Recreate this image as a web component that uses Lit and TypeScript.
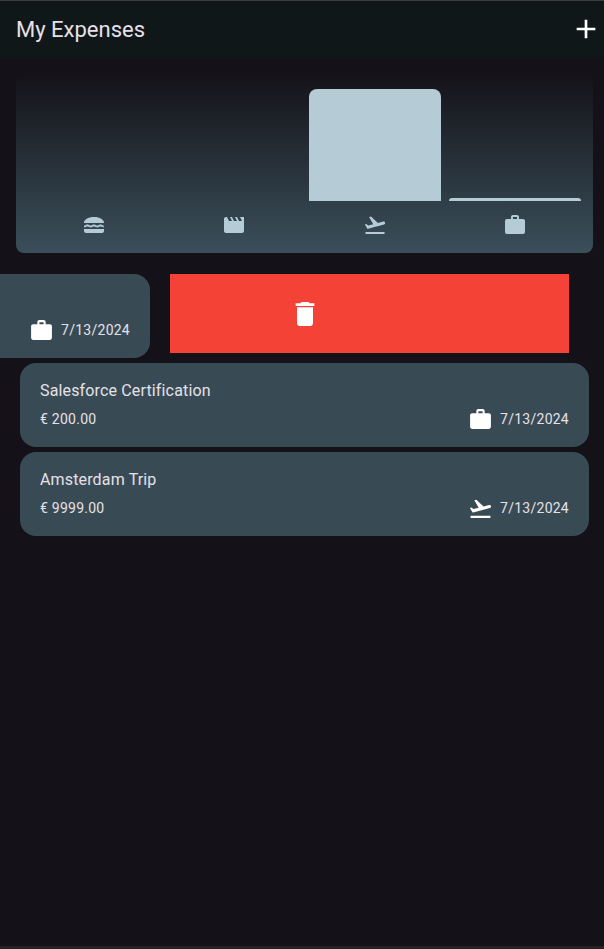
import { LitElement, html, css, svg } from "lit";
import { customElement } from "lit/decorators.js";

const ICONS = {
  food: svg`<path d="M22 10c.32-3.28-4.28-6-9.99-6S1.67 6.72 2 10h20zM5.35 13.5c.55 0 .78.14 1.15.36.45.27 1.07.64 2.13.64s1.67-.37 2.13-.64c.37-.23.59-.36 1.15-.36.55 0 .78.14 1.15.36.45.27 1.07.64 2.13.64 1.06 0 1.68-.37 2.13-.64.37-.22.6-.36 1.15-.36.55 0 .78.14 1.15.36.45.27 1.07.63 2.13.63v-2c-.55 0-.78-.14-1.15-.36-.45-.27-1.07-.64-2.13-.64s-1.68.37-2.13.64c-.37.23-.6.36-1.15.36s-.78-.14-1.15-.36c-.45-.27-1.07-.64-2.13-.64s-1.67.37-2.13.64c-.37.23-.59.36-1.15.36-.55 0-.78-.14-1.15-.36-.45-.27-1.07-.63-2.13-.63s-1.67.37-2.13.64c-.37.22-.6.36-1.15.36v2c1.06 0 1.68-.37 2.13-.64.37-.22.6-.36 1.15-.36zM2 16v2c0 1.1.9 2 2 2h16c1.1 0 2-.9 2-2v-2H2z"/>`,
  movie: svg`<path d="M18 4l2 4h-3l-2-4h-2l2 4h-3l-2-4H8l2 4H7L5 4H4c-1.1 0-1.99.9-1.99 2L2 18c0 1.1.9 2 2 2h16c1.1 0 2-.9 2-2V4h-4z"/>`,
  travel: svg`<path d="M2.5 19h19v2h-19zm19.57-9.36c-.21-.8-1.04-1.28-1.84-1.06L14.92 10l-6.9-6.43-1.93.51 4.14 7.17-4.97 1.33-1.97-1.54-1.45.39 1.82 3.16.77 1.33 1.6-.43 5.31-1.42 4.35-1.16L21 11.49c.81-.23 1.28-1.05 1.07-1.85z"/>`,
  work: svg`<path d="M20 6h-4V4c0-1.11-.89-2-2-2h-4c-1.11 0-2 .89-2 2v2H4c-1.11 0-1.99.89-1.99 2L2 19c0 1.11.89 2 2 2h16c1.11 0 2-.89 2-2V8c0-1.11-.89-2-2-2zm-6 0h-4V4h4v2z"/>`,
  trash: svg`<path d="M6 19c0 1.1.9 2 2 2h8c1.1 0 2-.9 2-2V7H6v12zM19 4h-3.5l-1-1h-5l-1 1H5v2h14V4z"/>`,
  add: svg`<path d="M19 13h-6v6h-2v-6H5v-2h6V5h2v6h6v2z"/>`,
};

type IconName = keyof typeof ICONS;

const icon = (name: IconName) => html`<svg viewBox="0 0 24 24" fill="currentColor">${ICONS[name]}</svg>`;

const BARS: { name: IconName; percent: number }[] = [
  { name: "food", percent: 0 },
  { name: "movie", percent: 0 },
  { name: "travel", percent: 100 },
  { name: "work", percent: 2.7 },
];

const EXPENSES: { title: string; amount: string; kind: IconName; date: string }[] = [
  { title: "Salesforce Certification", amount: "€ 200.00", kind: "work", date: "7/13/2024" },
  { title: "Amsterdam Trip", amount: "€ 9999.00", kind: "travel", date: "7/13/2024" },
];

@customElement("app-root")
export class AppRoot extends LitElement {
  static styles = css`
    :host {
      display: block;
      font-family: Roboto, sans-serif;
      color: #e6e0e9;
    }

    .page {
      display: flex;
      flex-direction: column;
      height: 949px;
      overflow: hidden;
      background: #141218;
      border-top: 1px solid #3a3d3f;
      border-bottom: 3px solid #232323;
      box-sizing: border-box;
    }

    .toolbar {
      display: flex;
      align-items: center;
      justify-content: space-between;
      height: 56px;
      padding: 0 2px 0 16px;
      background: #101719;
      flex: none;
    }

    .title {
      font-size: 22px;
      font-weight: 400;
    }

    .add {
      width: 32px;
      height: 32px;
      color: #fff;
    }

    .add svg {
      display: block;
    }

    .content {
      flex: 1;
      display: flex;
      flex-direction: column;
    }

    .chart {
      display: grid;
      grid-template-columns: repeat(4, 1fr);
      gap: 0 8px;
      margin: 16px 11px 0 16px;
      padding: 16px 12px;
      border-radius: 8px;
      background: linear-gradient(#141218, #3a4f5a);
    }

    .column {
      display: flex;
      flex-direction: column;
      align-items: center;
      gap: 12px;
    }

    .track {
      display: flex;
      align-items: flex-end;
      width: 100%;
      height: 112px;
    }

    .bar {
      width: 100%;
      background: #b5cbd6;
      border-radius: 8px 8px 0 0;
    }

    .column svg {
      display: block;
      width: 24px;
      height: 24px;
      color: #b5cbd6;
    }

    .list {
      display: flex;
      flex-direction: column;
      gap: 5px;
      margin-top: 21px;
    }

    .swiped {
      display: flex;
      gap: 20px;
      align-items: flex-start;
    }

    .card {
      box-sizing: border-box;
      height: 84px;
      padding: 17px 20px 0;
      background: #384b54;
      border-radius: 16px;
      font-size: 14px;
      letter-spacing: 0.25px;
    }

    .expense {
      margin: 0 15px 0 20px;
    }

    .swiped .card {
      width: 150px;
      flex: none;
      border-radius: 0 16px 16px 0;
    }

    .name {
      height: 22px;
      line-height: 22px;
      font-size: 16px;
      letter-spacing: 0.15px;
    }

    .meta {
      display: flex;
      justify-content: space-between;
      align-items: center;
      margin-top: 4px;
      height: 26px;
    }

    .when {
      display: flex;
      align-items: center;
      gap: 7px;
      margin-left: auto;
    }

    .amount + .when {
      margin-left: 0;
    }

    .when svg {
      display: block;
      width: 25px;
      height: 25px;
      color: #fff;
    }

    .delete {
      display: flex;
      align-items: center;
      width: 399px;
      height: 79px;
      flex: none;
      padding-left: 119px;
      box-sizing: border-box;
      background: #f44336;
      color: #fff;
    }

    .delete svg {
      display: block;
      width: 32px;
      height: 32px;
    }
  `;

  render() {
    return html`
      <div class="page">
        <header class="toolbar">
          <span class="title">My Expenses</span>
          <span class="add">${icon("add")}</span>
        </header>
        <main class="content">
          <section class="chart">
            ${BARS.map(b => html`
              <div class="column">
                <div class="track">
                  ${b.percent ? html`<div class="bar" style="height: ${b.percent}%"></div>` : ""}
                </div>
                ${icon(b.name)}
              </div>
            `)}
          </section>
          <section class="list">
            <div class="swiped">
              <div class="card">
                <div class="name"></div>
                <div class="meta">
                  <span class="when">${icon("work")}7/13/2024</span>
                </div>
              </div>
              <div class="delete">${icon("trash")}</div>
            </div>
            ${EXPENSES.map(e => html`
              <div class="card expense">
                <div class="name">${e.title}</div>
                <div class="meta">
                  <span class="amount">${e.amount}</span>
                  <span class="when">${icon(e.kind)}${e.date}</span>
                </div>
              </div>
            `)}
          </section>
        </main>
      </div>
    `;
  }
}
